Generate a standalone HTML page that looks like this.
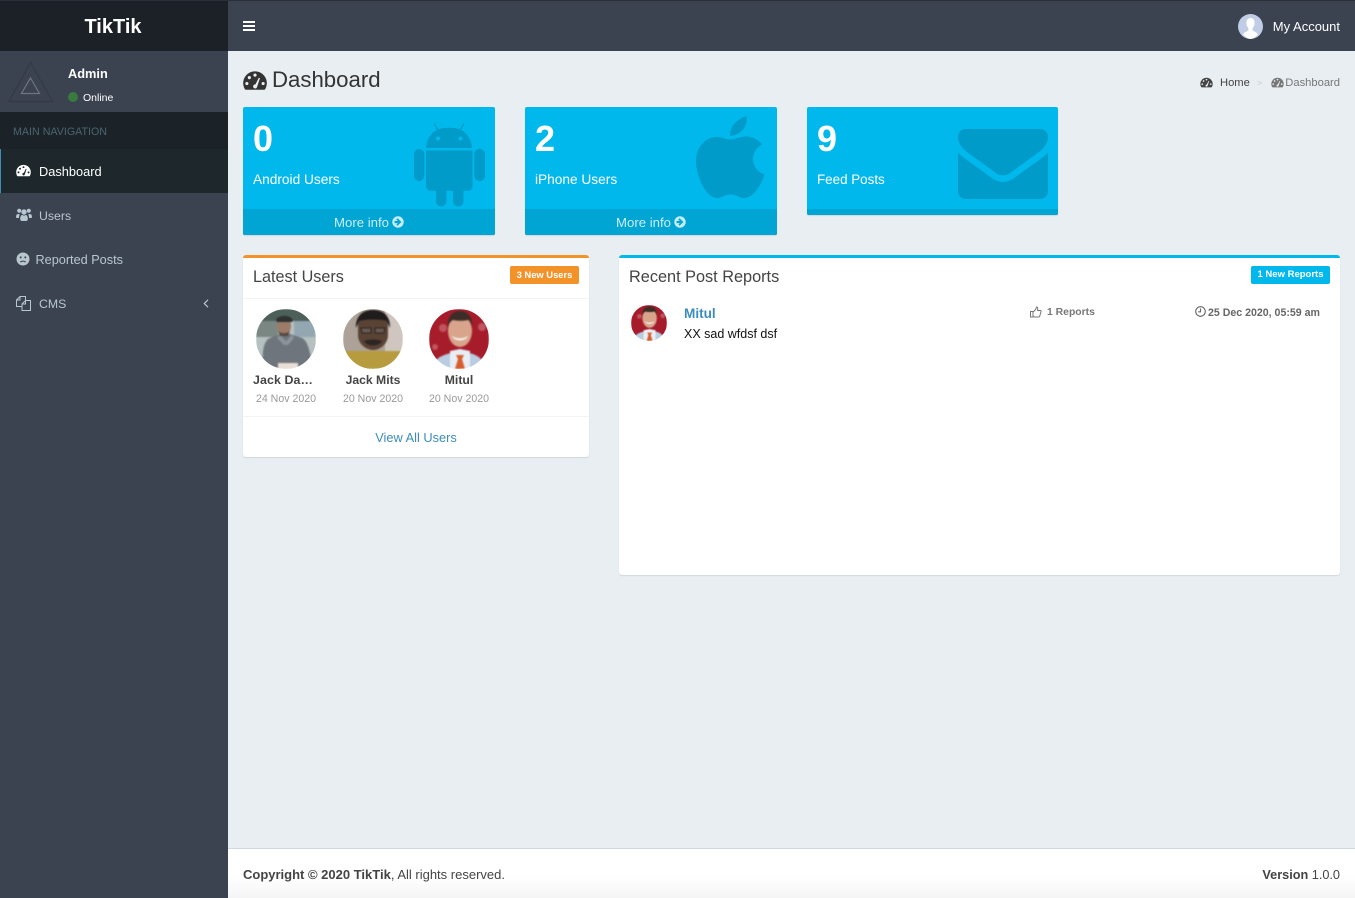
<!DOCTYPE html>
<html lang="en">
<head>
<meta charset="utf-8">
<title>TikTik | Dashboard</title>
<style>
html,body{margin:0;padding:0;width:1355px;height:898px;overflow:hidden;background:#e9eef2;font-family:"Liberation Sans",Arial,sans-serif;color:#333}
*{box-sizing:border-box}
.a,.t{position:absolute}
.t{white-space:nowrap;line-height:20px;height:20px;margin-top:1px}
a{text-decoration:none;color:inherit}
svg{position:absolute;display:block;overflow:visible}
.bar{background:#3b4250}
.box{background:#fff;border-radius:3px;box-shadow:0 1px 1px rgba(0,0,0,.1)}
.card{background:#00b8ec;border-radius:2px;height:128px;width:252px;top:107px;overflow:hidden;box-shadow:0 1px 1px rgba(0,0,0,.1)}
.foot{position:absolute;left:0;right:0;bottom:0;height:26px;background:#00a5d3;color:rgba(255,255,255,.8);font-size:13.2px;line-height:27px;text-align:left;padding-left:91px;white-space:nowrap}
.num{font-size:36px;font-weight:bold;color:#fff;line-height:40px;height:40px;margin-top:0}
.lab{font-size:13.7px;color:#fff}
.name{font-size:12.2px;font-weight:bold;color:#444;text-align:center;width:60px;top:369px}
.date{font-size:10.6px;color:#999;text-align:center;width:70px;top:388px}
.nav{font-size:12.8px;color:#b8c7ce}
.ph{filter:blur(.7px)}
</style>
</head>
<body>
<svg width="0" height="0" style="position:absolute">
  <defs>
    <symbol id="gauge" viewBox="0 0 18 16">
      <path d="M9 1C4 1 0 5 0 10c0 1.800.5 3.300 1.300 4.700.2.300.5.300.8.300h13.800c.3 0 .6 0 .8-.3C17.500 13.300 18 11.800 18 10c0-5-4-9-9-9z" fill="currentColor"/>
      <g fill="var(--h)">
        <circle cx="2.800" cy="10.300" r="1.200"/><circle cx="4.700" cy="5.800" r="1.200"/><circle cx="9" cy="3.900" r="1.200"/><circle cx="15.200" cy="10.300" r="1.200"/>
        <path d="M7.600 12.500a1.500 1.500 0 0 0 2.900.6L12.800 6.200l-.9-.3-2.600 5.100a1.500 1.500 0 0 0-1.700 1.500z"/>
      </g>
    </symbol>
    <clipPath id="c60"><circle cx="30" cy="30" r="30"/></clipPath>
    <clipPath id="c36"><circle cx="30" cy="30" r="30"/></clipPath>
  </defs>
</svg>

<!-- Top navbar -->
<div class="a bar" style="left:228px;top:0;width:1127px;height:51px;border-top:1px solid #2a2f38"></div>
<svg style="left:243px;top:21px" width="12" height="10" viewBox="0 0 12 10"><path d="M0 0h12v2H0zM0 4h12v2H0zM0 8h12v2H0z" fill="#fff"/></svg>
<svg style="left:1238px;top:14px" width="25" height="25" viewBox="0 0 25 25">
  <circle cx="12.500" cy="12.500" r="12.500" fill="#c0cde4"/>
  <path d="M12.500 4c2.700 0 4.100 2.200 4.100 5 0 2.300-1 4.200-2 5.100v2.400c1.800 1 4.200 1.600 5.400 3.900A12.500 12.500 0 0 1 12.500 25 12.500 12.500 0 0 1 5 20.400c1.200-2.300 3.600-2.900 5.400-3.900v-2.400c-1-.9-2-2.800-2-5.100 0-2.800 1.400-5 4.100-5z" fill="#fff"/>
</svg>
<div class="t" style="right:15px;top:16px;font-size:13px;color:#fff">My Account</div>

<!-- Sidebar -->
<div class="a bar" style="left:0;top:0;width:228px;height:898px"></div>
<div class="a" style="left:0;top:0;width:228px;height:51px;background:#1b2126;border-top:1px solid #2a2f38"></div>
<div class="a" style="left:0;top:16px;width:226px;text-align:center;font-size:20px;font-weight:bold;color:#fff;line-height:23px">TikTik</div>

<svg style="left:8px;top:61px" width="46" height="42" viewBox="0 0 46 42">
  <path d="M22.500 1.500 44.500 40.500H1z" fill="none" stroke="#333947" stroke-width="1.200"/>
  <path d="M22.500 17 31.500 32.500H13.500z" fill="none" stroke="#6f7682" stroke-width="1.200"/>
</svg>
<div class="t" style="left:68px;top:63px;font-size:12.800px;font-weight:bold;color:#fff">Admin</div>
<div class="a" style="left:68px;top:92px;width:10px;height:10px;border-radius:50%;background:#3b7a3e"></div>
<div class="t" style="left:83px;top:87px;font-size:10.500px;color:#fff">Online</div>

<div class="a" style="left:0;top:112px;width:228px;height:37px;background:#1b2328"></div>
<div class="t" style="left:13px;top:121px;font-size:10.700px;color:#4b646f">MAIN NAVIGATION</div>

<div class="a" style="left:0;top:149px;width:228px;height:44px;background:#1e282c;border-left:1px solid #3c8dbc"></div>
<svg style="left:16px;top:164px;color:#fff;--h:#1e282c" width="15" height="13"><use href="#gauge" width="15" height="13"/></svg>
<div class="t" style="left:39px;top:161px;font-size:12.800px;color:#fff">Dashboard</div>

<svg style="left:16px;top:208px" width="16" height="14" viewBox="0 0 16 14" fill="#b8c7ce">
  <circle cx="3.200" cy="2.800" r="2"/><circle cx="12.800" cy="2.800" r="2"/><circle cx="8" cy="4" r="2.700"/>
  <path d="M0 9c0-2 .8-3 2-3 .7 0 1.300.3 1.800.6C3.200 7.500 3 8.500 3 10H.8C.3 10 0 9.600 0 9zM16 9c0-2-.8-3-2-3-.7 0-1.300.3-1.800.6.600.9.800 1.900.8 3.400h2.200c.5 0 .8-.4.800-1zM4.200 11c0-2.800 1-4 2-4 .5.300 1.100.5 1.800.5s1.300-.2 1.800-.5c1 0 2 1.200 2 4 0 1.300-.8 2-1.800 2H6c-1 0-1.800-.7-1.800-2z"/>
</svg>
<div class="t" style="left:39px;top:205px;font-size:12.300px;color:#b8c7ce">Users</div>

<svg style="left:16px;top:252px" width="14" height="14" viewBox="0 0 14 14">
  <circle cx="7" cy="7" r="6.500" fill="#b8c7ce"/>
  <circle cx="4.700" cy="5.400" r="1" fill="#3b4250"/><circle cx="9.300" cy="5.400" r="1" fill="#3b4250"/>
  <path d="M4.300 10.100c1.600-1.300 3.800-1.300 5.400 0" fill="none" stroke="#3b4250" stroke-width="1.100"/>
</svg>
<div class="t" style="left:35.500px;top:249px;font-size:12.700px;color:#b8c7ce">Reported Posts</div>

<svg style="left:16px;top:296px" width="15" height="15" viewBox="0 0 15 15" fill="none" stroke="#b8c7ce" stroke-width="1">
  <path d="M6 10.500H.5V4L4 .5h5.500v3.500"/>
  <path d="M4 .8V4H.8"/>
  <path d="M6 14.500V8l3.500-3.500h5v10z"/>
  <path d="M9.500 4.800V8H6.300"/>
</svg>
<div class="t" style="left:39px;top:293px;font-size:12.300px;color:#b8c7ce">CMS</div>
<svg style="left:203px;top:299px" width="6" height="9" viewBox="0 0 6 9"><path d="M5 .8 1.300 4.500 5 8.200" fill="none" stroke="#b8c7ce" stroke-width="1.200"/></svg>

<!-- Content heading -->
<svg style="left:243px;top:70px;color:#333;--h:#e9eef2" width="24" height="21"><use href="#gauge" width="24" height="21"/></svg>
<div class="t" style="left:272px;top:68px;font-size:22.200px;line-height:22px;height:22px;color:#333">Dashboard</div>

<svg style="left:1200px;top:77px;color:#444;--h:#e9eef2" width="13" height="11"><use href="#gauge" width="13" height="11"/></svg>
<div class="t" style="left:1220px;top:72px;font-size:11.200px;color:#444">Home</div>
<div class="t" style="left:1257px;top:72px;font-size:9px;color:#ccc">&gt;</div>
<svg style="left:1271px;top:77px;color:#777;--h:#e9eef2" width="13" height="11"><use href="#gauge" width="13" height="11"/></svg>
<div class="t" style="right:15px;top:72px;font-size:11.200px;color:#777">Dashboard</div>

<!-- Stat cards -->
<div class="a card" style="left:243px">
  <svg style="left:171px;top:15px" width="71" height="85" viewBox="0 0 71 85" fill="#009bc8">
    <path d="M12 26C12.500 17 18 10 23 8L19.500 1.500l1-.5L24.300 7.500C27 6.300 29.800 5.800 35 5.800s8 .5 10.700 1.700L49.500 1l1 .5L47 8c5 2 10.500 9 11 18z"/>
    <circle cx="24" cy="16.500" r="2.100" fill="#00b8ec"/><circle cx="46.500" cy="16.500" r="2.100" fill="#00b8ec"/>
    <path d="M12 28.500h46.500V64c0 2.800-2 4.700-4.500 4.700H16.500c-2.500 0-4.500-1.900-4.500-4.700z"/>
    <rect x="0" y="27" width="10.300" height="32" rx="5"/><rect x="60.300" y="27" width="10.700" height="32" rx="5"/>
    <path d="M22 68h10.500v11.300a5.250 5.250 0 0 1-10.500 0zM39 68h10.500v11.300a5.250 5.250 0 0 1-10.500 0z"/>
  </svg>
  <div class="t num" style="left:10px;top:12px">0</div>
  <div class="t lab" style="left:10px;top:62px">Android Users</div>
  <div class="foot">More info <svg style="left:149px;top:7px" width="12" height="12" viewBox="0 0 13 13"><circle cx="6.500" cy="6.500" r="6.200" fill="#c6edf8"/><path d="M2.800 5.300h3.500L4.700 3.700l1.300-1.300 4.200 4.100L6 10.600 4.700 9.300l1.600-1.600H2.800z" fill="#00a5d3"/></svg></div>
</div>

<div class="a card" style="left:525px">
  <svg style="left:171px;top:8px" width="70" height="84" viewBox="0 0 70 84" fill="#009bc8">
    <path d="M50.500 1C45 2.500 37 8 35 14c-.8 2.500-1 5-1 7 7-.5 13-4.500 15.500-10.500C50.800 7 51 4 50.500 1z"/>
    <path d="M21 22C9 22 0 33 0 46c0 15 10 37 21 37 5 0 7-3.500 13.500-3.500S43 83 48 83c9.500 0 17-12.500 20.500-23.500-7-2.500-11.500-8-11.500-15.500 0-6.500 3.500-11.500 9-14.500-4.500-6-11-8.500-17-8-5.500.3-10 3-15 3s-7-2.500-13-2.500z"/>
  </svg>
  <div class="t num" style="left:10px;top:12px">2</div>
  <div class="t lab" style="left:10px;top:62px">iPhone Users</div>
  <div class="foot">More info <svg style="left:149px;top:7px" width="12" height="12" viewBox="0 0 13 13"><circle cx="6.500" cy="6.500" r="6.200" fill="#c6edf8"/><path d="M2.800 5.300h3.500L4.700 3.700l1.300-1.300 4.200 4.100L6 10.600 4.700 9.300l1.600-1.600H2.800z" fill="#00a5d3"/></svg></div>
</div>

<div class="a card" style="left:807px;width:251px;height:108px">
  <svg style="left:151px;top:22px" width="90" height="70" viewBox="0 0 90 70" fill="#009bc8">
    <path d="M8 0h74c5 0 8 3.500 8 8 0 6-4 11-9 15L52 44c-4 3-10 3-14 0L9 23C4 19 0 14 0 8c0-4.500 3-8 8-8z"/>
    <path d="M0 23.500c2 2.300 4 4 6.500 5.700L34.500 49.500c6.500 4.700 14.500 4.700 21 0L83.500 29.200c2.500-1.700 4.500-3.400 6.500-5.700V62c0 4.500-3.500 8-8 8H8c-4.500 0-8-3.500-8-8z"/>
  </svg>
  <div class="t num" style="left:10px;top:12px">9</div>
  <div class="t lab" style="left:10px;top:62px;font-size:13.400px">Feed Posts</div>
  <div class="foot" style="height:6px"></div>
</div>

<!-- Latest users -->
<div class="a box" style="left:243px;top:255px;width:346px;height:202px;border-top:3px solid #f39229"></div>
<div class="t" style="left:253px;top:266px;font-size:16.200px;color:#444">Latest Users</div>
<div class="a" style="left:510px;top:266px;width:69px;height:18px;border-radius:2px;background:#f39229;color:#fff;font-size:9.400px;font-weight:bold;line-height:18px;text-align:center;white-space:nowrap">3 New Users</div>
<div class="a" style="left:243px;top:298px;width:346px;height:1px;background:#f4f4f4"></div>

<svg style="left:256px;top:309px" width="60" height="60" viewBox="0 0 60 60">
  <g clip-path="url(#c60)"><g class="ph">
    <rect width="60" height="60" fill="#b5c1c0"/>
    <rect y="0" width="60" height="12" fill="#4c5f58"/>
    <rect x="0" y="12" width="22" height="16" fill="#7b8783"/>
    <rect x="38" y="12" width="22" height="16" fill="#93a7b3"/>
    <path d="M7 58c-1-14 0-26 7-29l11-4h9l12 4c6 3 8 14 10 26l-8 5z" fill="#6f757d"/>
    <path d="M24 26l6 6 6-6 2 3-6 7h-4l-7-7z" fill="#8d939b"/>
    <ellipse cx="28" cy="17" rx="7" ry="9" fill="#9c7b68"/>
    <path d="M20 11c2-5 13-6 17 0l-1 2H21z" fill="#2f3032"/>
    <path d="M22 22c3 3 9 3 12 0l-2 5h-8z" fill="#55473f"/>
    <rect x="22" y="54" width="20" height="6" fill="#e9dfd6"/>
  </g></g>
</svg>
<svg style="left:343px;top:309px" width="60" height="60" viewBox="0 0 60 60">
  <g clip-path="url(#c60)"><g class="ph">
    <rect width="60" height="60" fill="#ada298"/>
    <rect x="42" width="18" height="42" fill="#cfc6bf"/>
    <path d="M0 60V42h60v18z" fill="#b79c3f"/>
    <path d="M15 12c0-8 7-11 15-11s15 3 15 11v14c0 9-8 15-15 15s-15-6-15-15z" fill="#5a4334"/>
    <path d="M13 19C12 6 22 1 30 1s18 5 17 18l-3-7c-6-2-22-2-28 0z" fill="#1f1c1d"/>
    <path d="M18 19h10v5h-9zM32 19h10l-1 5h-9z" fill="#6d5a52" stroke="#252222" stroke-width="1"/>
    <path d="M21 32c5-2 13-2 18 0-3 6-15 6-18 0z" fill="#2d2424"/>
  </g></g>
</svg>
<svg style="left:429px;top:309px" width="60" height="60" viewBox="0 0 60 60">
  <g clip-path="url(#c60)"><g class="ph">
    <rect width="60" height="60" fill="#a61c2a"/>
    <circle cx="14" cy="19" r="4" fill="#bf5560"/><circle cx="53" cy="18" r="4" fill="#bf5560"/><circle cx="6" cy="38" r="3" fill="#bf5560"/>
    <path d="M4 60c1-10 6-12 14-15l13-3 13 3c7 3 11 6 12 15z" fill="#b9cce0"/>
    <path d="M21 60V42l10-2 10 2v18z" fill="#e8eef5"/>
    <path d="M27 46h8l-2 4 3 10h-10l3-10z" fill="#d85c2c"/>
    <ellipse cx="31" cy="22" rx="12" ry="16" fill="#d8a58c"/>
    <path d="M19 18c-1-11 5-16 12-16s13 5 12 16c-1-4-2-6-4-7-5 1-10 1-15 0-2 1-4 3-5 7z" fill="#3d2d27"/>
    <path d="M23 27c5 3 11 3 16 0-2 6-14 6-16 0z" fill="#f4efec"/>
  </g></g>
</svg>

<div class="t name" style="left:250px;width:66px;text-align:center;font-size:12.400px;letter-spacing:.1px">Jack Da…</div>
<div class="t name" style="left:343px">Jack Mits</div>
<div class="t name" style="left:429px">Mitul</div>
<div class="t date" style="left:251px">24 Nov 2020</div>
<div class="t date" style="left:338px">20 Nov 2020</div>
<div class="t date" style="left:424px">20 Nov 2020</div>

<div class="a" style="left:243px;top:416px;width:346px;height:1px;background:#f4f4f4"></div>
<div class="t" style="left:243px;width:346px;top:427px;text-align:center;font-size:12.800px;color:#3c8dbc">View All Users</div>

<!-- Recent post reports -->
<div class="a box" style="left:619px;top:255px;width:721px;height:320px;border-top:3px solid #00b8ec"></div>
<div class="t" style="left:629px;top:266px;font-size:16.300px;color:#444">Recent Post Reports</div>
<div class="a" style="left:1251px;top:266px;width:79px;height:18px;border-radius:2px;background:#00b8ec;color:#fff;font-size:9.500px;font-weight:bold;line-height:18px;text-align:center;white-space:nowrap">1 New Reports</div>

<svg style="left:631px;top:305px" width="36" height="36" viewBox="0 0 60 60">
  <g clip-path="url(#c36)"><g class="ph">
    <rect width="60" height="60" fill="#a61c2a"/>
    <circle cx="14" cy="19" r="4" fill="#bf5560"/><circle cx="53" cy="18" r="4" fill="#bf5560"/>
    <path d="M4 60c1-10 6-12 14-15l13-3 13 3c7 3 11 6 12 15z" fill="#b9cce0"/>
    <path d="M21 60V42l10-2 10 2v18z" fill="#e8eef5"/>
    <path d="M27 46h8l-2 4 3 10h-10l3-10z" fill="#d85c2c"/>
    <ellipse cx="31" cy="22" rx="12" ry="16" fill="#d8a58c"/>
    <path d="M19 18c-1-11 5-16 12-16s13 5 12 16c-1-4-2-6-4-7-5 1-10 1-15 0-2 1-4 3-5 7z" fill="#3d2d27"/>
    <path d="M23 27c5 3 11 3 16 0-2 6-14 6-16 0z" fill="#f4efec"/>
  </g></g>
</svg>
<div class="t" style="left:684px;top:303px;font-size:13.600px;font-weight:bold;color:#3c8dbc">Mitul</div>
<div class="t" style="left:684px;top:323px;font-size:12.500px;color:#111">XX sad wfdsf dsf</div>

<svg style="left:1030px;top:306px" width="12" height="12" viewBox="0 0 12 12" fill="none" stroke="#777" stroke-width="1">
  <path d="M.5 5.500h2.500v5.500H.5zM3 6c1.500-1 3-2.500 3.500-5 1.300 0 1.500 1.500 1 3.500h3c.7 0 .8.800.4 1.500L9.800 10c-.3.700-.8 1-1.500 1H5c-.8 0-1.300-.3-2-.6"/>
</svg>
<div class="t" style="left:1047px;top:302px;font-size:10.400px;font-weight:bold;color:#777">1 Reports</div>
<svg style="left:1195px;top:306px" width="11" height="11" viewBox="0 0 11 11" fill="none" stroke="#666" stroke-width="1.100">
  <circle cx="5.500" cy="5.500" r="4.800"/><path d="M5.500 2.500v3.300H3.200"/>
</svg>
<div class="t" style="left:1208px;top:302px;font-size:10.600px;font-weight:bold;color:#666">25 Dec 2020, 05:59 am</div>

<!-- Footer -->
<div class="a" style="left:228px;top:848px;width:1127px;height:50px;border-top:1px solid #d2d6de;background:linear-gradient(#fff 55%,#f5f5f5)"></div>
<div class="t" style="left:243px;top:864px;font-size:13px;color:#444"><b>Copyright © 2020 TikTik</b>, All rights reserved.</div>
<div class="t" style="right:15px;top:864px;font-size:12.700px;color:#444"><b>Version</b> 1.0.0</div>
</body>
</html>
